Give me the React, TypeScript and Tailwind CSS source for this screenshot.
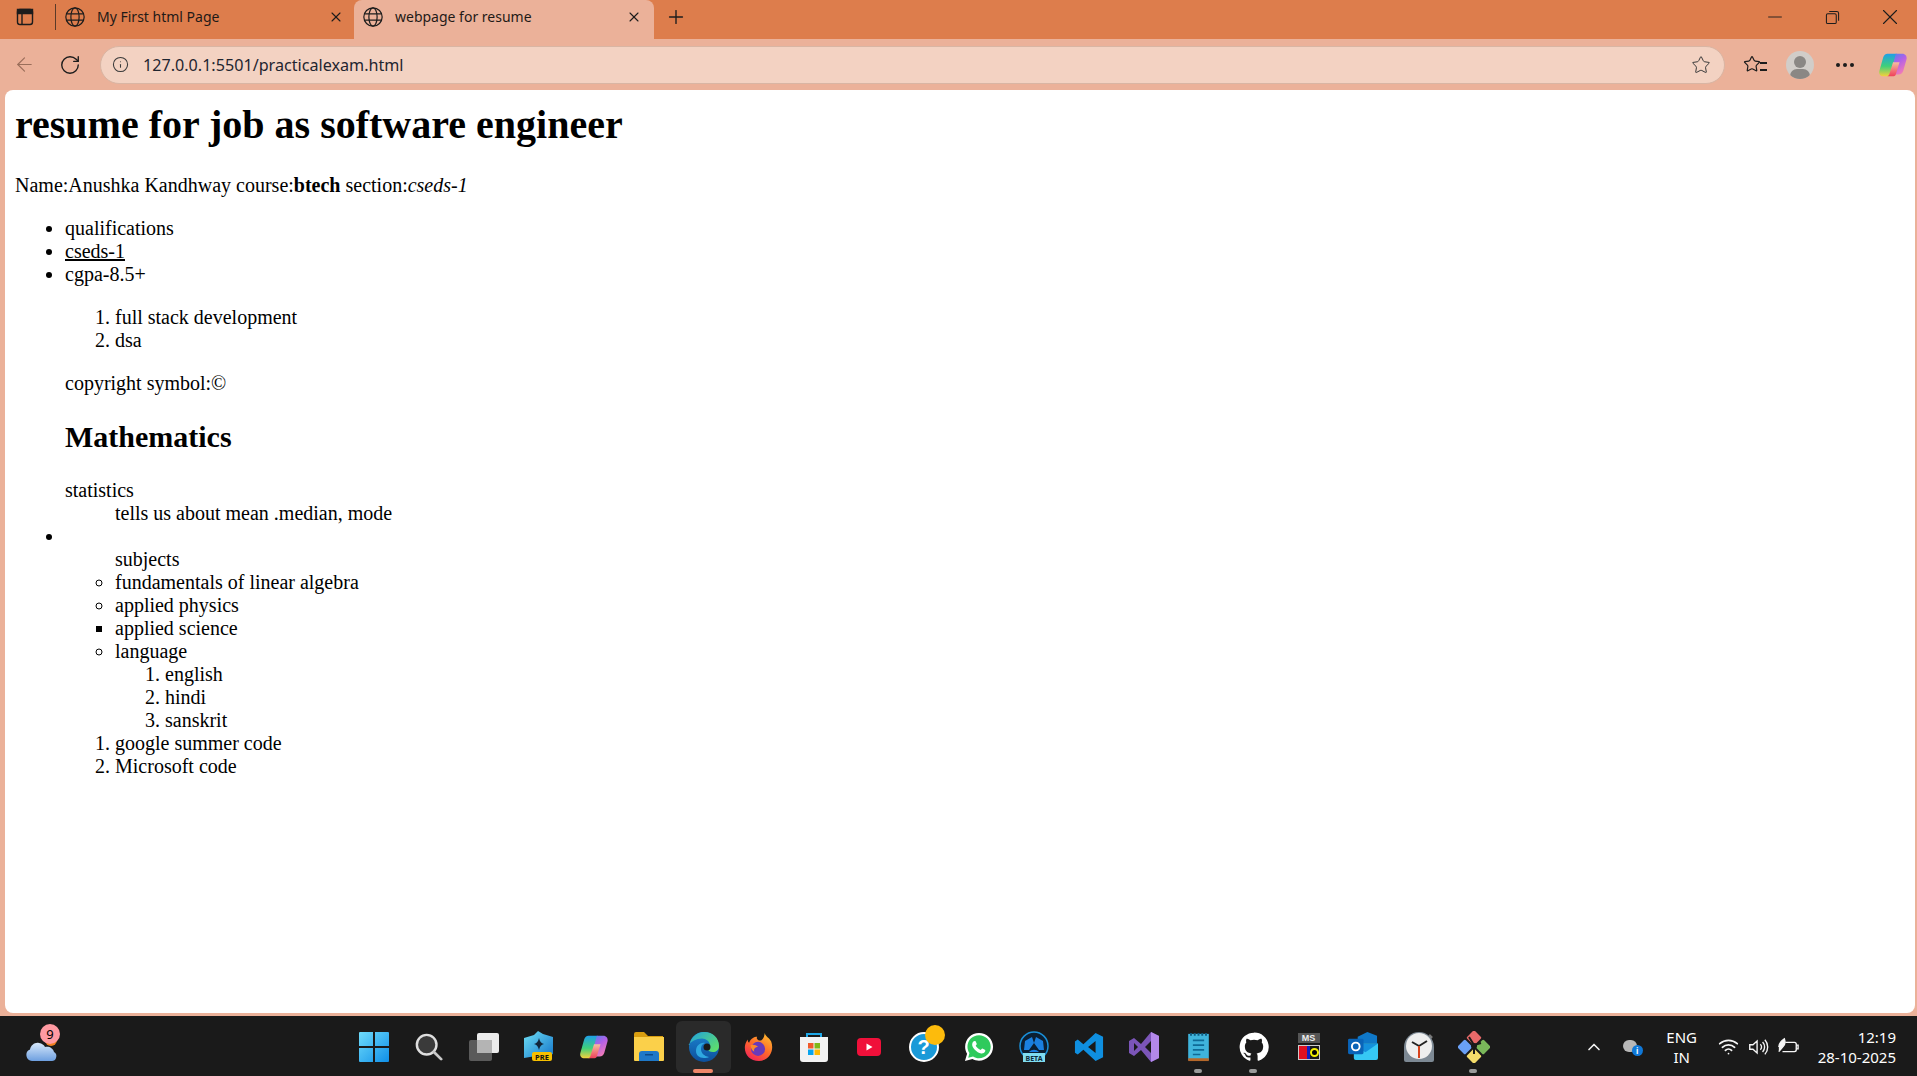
import { ReactNode } from "react";
import { ArrowLeft, RotateCw, Info, Star, Plus, X, Minus, ChevronUp, Wifi } from "lucide-react";

function Globe() {
  return (
    <svg viewBox="0 0 24 24" className="w-[22px] h-[22px] shrink-0" fill="none" stroke="#1c1c1c" strokeWidth="1.3">
      <circle cx="12" cy="12" r="10" />
      <ellipse cx="12" cy="12" rx="4.5" ry="10" />
      <path d="M2.6 8.5h18.8M2.6 15.5h18.8" />
    </svg>
  );
}

function Tab({ title, active }: { title: string; active?: boolean }) {
  return (
    <div className={`flex items-center h-[39px] w-full pl-2 pb-[5px] ${active ? "bg-[#ebb199] rounded-t-lg pr-[12px]" : "pr-[10px]"}`}>
      <Globe />
      <span className="ml-[11px] -mt-px text-[14px] text-[#1f1a17] flex-1">{title}</span>
      <X size={16} strokeWidth={1.6} color="#1c1c1c" />
    </div>
  );
}

function TaskIcon({ children, running, active }: { children: ReactNode; running?: boolean; active?: boolean }) {
  return (
    <div className={`relative w-[55px] h-[52px] flex items-center justify-center rounded-md ${active ? "bg-[#2a2a2a]" : ""}`}>
      {children}
      {running && <div className="absolute bottom-0 left-[23px] w-[8px] h-[4px] rounded-full bg-[#9a9a9a]" />}
      {active && <div className="absolute bottom-0 left-[17px] w-[20px] h-[4px] rounded-full bg-[#f0876a]" />}
    </div>
  );
}

function WindowsLogo() {
  return (
    <svg viewBox="0 0 30 30" className="w-[30px] h-[30px]">
      <defs>
        <linearGradient id="winG" x1="0" y1="0" x2="1" y2="1">
          <stop offset="0" stopColor="#6fdcfb" />
          <stop offset="1" stopColor="#0f8fe8" />
        </linearGradient>
      </defs>
      <path fill="url(#winG)" d="M0 1a1 1 0 0 1 1-1h13v14H0zM16 0h13a1 1 0 0 1 1 1v13H16zM0 16h14v14H1a1 1 0 0 1-1-1zM16 16h14v13a1 1 0 0 1-1 1H16z" />
    </svg>
  );
}

function SearchIcon() {
  return (
    <svg viewBox="0 0 30 30" className="w-[28px] h-[28px]">
      <circle cx="12.500" cy="12.500" r="10.500" fill="#3a3a3a" stroke="#dedede" strokeWidth="2.600" />
      <path d="M20 20l8 8" stroke="#c8c8c8" strokeWidth="3" strokeLinecap="round" />
    </svg>
  );
}

function TaskViewIcon() {
  return (
    <svg viewBox="0 0 32 32" className="w-[32px] h-[32px]">
      <rect x="1" y="9" width="23" height="21" rx="2" fill="#5a5a5a" />
      <rect x="9" y="2" width="22" height="20" rx="2" fill="#ececec" />
      <rect x="9" y="9" width="15" height="13" fill="#b4b4b4" />
    </svg>
  );
}

function CopilotPreIcon() {
  return (
    <svg viewBox="0 0 32 32" className="w-[32px] h-[32px]">
      <defs>
        <linearGradient id="preG" x1="0" y1="0" x2="1" y2="1">
          <stop offset="0" stopColor="#6fe0f5" />
          <stop offset="1" stopColor="#1273c9" />
        </linearGradient>
      </defs>
      <path fill="url(#preG)" d="M15 0l5 3 10 3v17l-12 5-5-3-12 2V7l10-3z" />
      <path fill="#12263a" d="M16 7c.8 3.500 2 5 5 6-3 1-4.200 2.500-5 6-.8-3.500-2-5-5-6 3-1 4.200-2.500 5-6z" />
      <rect x="9" y="21" width="20" height="9" rx="2" fill="#f7c000" />
      <text x="19" y="28.500" textAnchor="middle" fontSize="7.500" fontWeight="700" fill="#111" fontFamily="'Noto Sans', sans-serif">PRE</text>
    </svg>
  );
}

function CopilotIcon({ id, size }: { id: string; size: number }) {
  return (
    <svg viewBox="0 0 32 32" width={size} height={size}>
      <defs>
        <linearGradient id={id + "a"} x1="0" y1="0" x2="0" y2="1">
          <stop offset="0" stopColor="#1f9fe8" />
          <stop offset="0.55" stopColor="#3fd07a" />
          <stop offset="1" stopColor="#f5d13c" />
        </linearGradient>
        <linearGradient id={id + "b"} x1="0" y1="0" x2="0.600" y2="1">
          <stop offset="0" stopColor="#3f8af0" />
          <stop offset="0.5" stopColor="#b060e8" />
          <stop offset="1" stopColor="#f07ab8" />
        </linearGradient>
        <linearGradient id={id + "c"} x1="0" y1="0" x2="0" y2="1">
          <stop offset="0" stopColor="#f5c0a0" />
          <stop offset="1" stopColor="#f0405a" />
        </linearGradient>
      </defs>
      <path fill={`url(#${id}a)`} d="M10 4h10l-7 22c-.6 1.500-2 2-3 2H6c-3.500 0-5.500-2.500-4.500-6l4-14C6.200 5.500 8 4 10 4z" />
      <path fill={`url(#${id}b)`} d="M19 4h7c3 0 5 2.500 4.500 5.500L27 22c-.7 2.500-2.500 4-5 4h-9z" />
      <path fill={`url(#${id}c)`} d="M16 13h7l-4 13c-.6 1.500-2 2-3 2h-7c1.500 0 2.500-.8 3-2z" />
    </svg>
  );
}

function FolderIcon() {
  return (
    <svg viewBox="0 0 32 30" className="w-[32px] h-[30px]">
      <path fill="#d99e10" d="M1 2a2 2 0 0 1 2-2h8l4 4h15v6H1z" />
      <path fill="#fbd04a" d="M1 5h30v23a1 1 0 0 1-1 1H2a1 1 0 0 1-1-1z" />
      <path fill="#1e78c8" d="M6 22a3 3 0 0 1 3-3h14a3 3 0 0 1 3 3v7H6z" />
      <rect x="12" y="22" width="8" height="1.500" fill="#0c4a88" />
    </svg>
  );
}

function EdgeIcon() {
  return (
    <svg viewBox="0 0 32 32" className="w-[32px] h-[32px]">
      <defs>
        <linearGradient id="edgeA" x1="0" y1="0" x2="1" y2="0.800">
          <stop offset="0" stopColor="#1f9fe0" />
          <stop offset="1" stopColor="#5fe06a" />
        </linearGradient>
        <linearGradient id="edgeB" x1="0" y1="0" x2="0" y2="1">
          <stop offset="0" stopColor="#1c84d0" />
          <stop offset="1" stopColor="#0d4f9c" />
        </linearGradient>
      </defs>
      <circle cx="16" cy="16" r="15" fill="url(#edgeB)" />
      <path fill="url(#edgeA)" d="M1.500 14C3 6 9 1 16 1c9 0 15 6 15 14 0 4-3 6-6 6-3 0-5-1-4.500-2.500 1-1.500 1.500-2.500 1.500-4 0-4-4-7-8-7-6 0-11 3-13.500 6.500z" />
      <path fill="#2fa8e0" d="M8 20c0-5 4-9 9-8-3 1-4 3-4 6 0 4 3 7 8 8-1 .6-3 1-5 1-5 0-8-3-8-7z" />
      <circle cx="19" cy="16" r="3.500" fill="#1a1a1a" />
    </svg>
  );
}

function FirefoxIcon() {
  return (
    <svg viewBox="0 0 32 32" className="w-[30px] h-[30px]">
      <defs>
        <linearGradient id="foxG" x1="0.800" y1="0" x2="0.200" y2="1">
          <stop offset="0" stopColor="#ffbd2e" />
          <stop offset="0.5" stopColor="#ff6a2a" />
          <stop offset="1" stopColor="#f0205a" />
        </linearGradient>
      </defs>
      <path fill="url(#foxG)" d="M22 1c1 4 5 5 7 9 3 8 0 20-13 21C6 31 0 24 1 15c.5-3 1.500-5 3-7 0 2 .5 3 1.500 3.500C7 7 11 5 14 5c-1 2 0 3 2 4 3 1 6-3 6-8z" />
      <circle cx="15" cy="18" r="7.500" fill="#6a3ab8" />
      <path fill="#ff8a2a" d="M7 14c3-1 6 0 8 2-3 0-5 2-4 5-2-1-4-4-4-7z" />
    </svg>
  );
}

function StoreIcon() {
  return (
    <svg viewBox="0 0 30 32" className="w-[30px] h-[32px]">
      <path d="M8 7V3h14v4" fill="none" stroke="#1ea8e8" strokeWidth="2" />
      <path fill="#f2f2f2" d="M1 6h28v22a3 3 0 0 1-3 3H4a3 3 0 0 1-3-3z" />
      <rect x="9" y="12" width="5.500" height="5.500" fill="#f05a2a" />
      <rect x="15.500" y="12" width="5.500" height="5.500" fill="#80b818" />
      <rect x="9" y="18.500" width="5.500" height="5.500" fill="#08a4ee" />
      <rect x="15.500" y="18.500" width="5.500" height="5.500" fill="#ffb900" />
    </svg>
  );
}

function YoutubeIcon() {
  return (
    <svg viewBox="0 0 26 20" className="w-[26px] h-[20px]">
      <rect width="24" height="18" x="1" y="1" rx="4" fill="#f0103a" />
      <path d="M10.500 6.500l6 3.500-6 3.500z" fill="#fff" />
    </svg>
  );
}

function HelpIcon() {
  return (
    <div className="relative">
      <div className="w-[30px] h-[30px] rounded-full bg-[#1a9ad8] border-2 border-white flex items-center justify-center text-white text-[20px] font-bold font-['Liberation_Sans',sans-serif]">?</div>
      <div className="absolute -top-[7px] left-[16px] w-[20px] h-[20px] rounded-full bg-[#fdbb0c]" />
    </div>
  );
}

function WhatsappIcon() {
  return (
    <svg viewBox="0 0 32 32" className="w-[30px] h-[30px]">
      <path fill="#fff" d="M16 1C7.700 1 1.200 7.500 1.200 15.700c0 2.800.8 5.400 2.100 7.600L1 31l8-2.200c2.100 1.200 4.500 1.800 7 1.800 8.200 0 15-6.700 15-14.900S24.200 1 16 1z" />
      <path fill="#2fca5c" d="M16 3.500C9 3.500 3.700 9 3.700 15.700c0 2.500.8 4.800 2.100 6.700l-1.300 5 5.200-1.400c1.900 1.200 4 1.900 6.300 1.900 6.900 0 12.500-5.500 12.500-12.200S22.900 3.500 16 3.500z" />
      <path fill="#fff" d="M11.500 9.500c-.5 0-1.300.3-1.800 1-.6.8-1 1.800-1 3 0 1.800 1.300 3.700 2.800 5.400 2 2.100 4.300 3.500 6.800 3.900 1.800.3 3.600-.6 4.200-2 .2-.6.3-1.200.2-1.500-.2-.3-2.700-1.600-3.200-1.700-.5-.1-1.200 1.300-1.700 1.500-2-.6-4.300-2.600-5.300-4.500.3-.6 1.200-1.200 1.100-1.800-.1-.5-1.100-2.900-1.500-3.200-.2-.1-.4-.1-.6-.1z" />
    </svg>
  );
}

function BetaIcon() {
  return (
    <svg viewBox="0 0 32 32" className="w-[32px] h-[32px]">
      <circle cx="16" cy="15" r="14" fill="#0b1f33" stroke="#1a8fd8" strokeWidth="1.500" />
      <path fill="#1a7fe0" d="M7 10l7-4 2 6-5 7H6zM25 10l-7-4-2 6 5 7h5z" />
      <path fill="#1a7fe0" d="M11 21c3-3 7-3 10 0z" />
      <rect x="5" y="22" width="22" height="9" fill="#7fdcf0" />
      <text x="16" y="29.500" textAnchor="middle" fontSize="7" fontWeight="700" fill="#0b2a3a" fontFamily="'Noto Sans', sans-serif">BETA</text>
    </svg>
  );
}

function VsCodeIcon() {
  return (
    <svg viewBox="0 0 32 32" className="w-[30px] h-[30px]">
      <path fill="#0f8fe0" d="M23 1l8 4v22l-8 4-13-12-6 5-3-2V10l3-2 6 5zM23 9.500L15 16l8 6.500z" />
    </svg>
  );
}

function VisualStudioIcon() {
  return (
    <svg viewBox="0 0 32 32" className="w-[32px] h-[32px]">
      <path fill="#7b55b8" d="M1 10l5-3 7 6L23 1l8 4v22l-8 4-10-12-7 6-5-3zM6 12v8l4-4zM23 10l-6 6 6 6z" />
      <path fill="#b388ea" d="M23 1l8 4v22l-8 4z" />
    </svg>
  );
}

function NotepadIcon() {
  return (
    <svg viewBox="0 0 24 32" className="w-[23px] h-[30px]">
      <rect x="1" y="2" width="22" height="28" fill="#3fb4dc" />
      <rect x="1" y="28" width="22" height="3" fill="#b5682a" />
      <path d="M6 9h12M6 14h12M6 19h12M6 24h8" stroke="#0f6a96" strokeWidth="1.800" />
      <path d="M4 1v3M8 1v3M12 1v3M16 1v3M20 1v3" stroke="#0f5a80" strokeWidth="2" />
    </svg>
  );
}

function GithubIcon() {
  return (
    <svg viewBox="0 0 24 24" className="w-[30px] h-[30px]" fill="#fff">
      <path d="M12 .5a11.500 11.500 0 0 0-3.640 22.410c.58.110.790-.250.790-.550v-2.030c-3.200.700-3.870-1.370-3.870-1.370-.520-1.330-1.280-1.680-1.280-1.680-1.050-.720.080-.700.080-.700 1.150.080 1.760 1.180 1.760 1.180 1.030 1.760 2.700 1.250 3.360.960.100-.750.400-1.250.730-1.540-2.550-.290-5.240-1.280-5.240-5.680 0-1.260.450-2.280 1.180-3.090-.120-.290-.510-1.460.110-3.050 0 0 .960-.310 3.160 1.180a11 11 0 0 1 5.760 0c2.200-1.490 3.160-1.180 3.160-1.180.620 1.590.230 2.760.110 3.050.740.810 1.180 1.830 1.180 3.090 0 4.410-2.690 5.380-5.250 5.670.410.360.780 1.050.780 2.120v3.140c0 .310.210.670.800.550A11.500 11.500 0 0 0 12 .5z" />
    </svg>
  );
}

function MsIcon() {
  return (
    <div className="w-[22px] flex flex-col gap-[2px]">
      <div className="h-[10px] bg-[#555] text-[#eee] text-[9px] leading-[10px] text-center font-bold font-['Liberation_Sans',sans-serif]">MS</div>
      <div className="h-[15px] border border-[#ccc] flex items-center">
        <div className="flex-1 h-full bg-[#e01020]" />
        <div className="w-[3px] h-full bg-[#1020c0]" />
        <div className="w-[9px] h-[9px] rounded-full border-2 border-[#f5f000] bg-black" />
      </div>
    </div>
  );
}

function OutlookIcon() {
  return (
    <svg viewBox="0 0 32 30" className="w-[31px] h-[29px]">
      <path fill="#0f78c8" d="M10 5l10-5 10 4v8H10z" />
      <path fill="#36c8f5" d="M6 12h25v15a2 2 0 0 1-2 2H8a2 2 0 0 1-2-2z" />
      <path fill="#1490dc" d="M31 12L18 21 6 14v-2z" />
      <rect x="0" y="7" width="16" height="16" rx="1.500" fill="#0a64b8" />
      <circle cx="8" cy="15" r="4" fill="none" stroke="#fff" strokeWidth="2" />
    </svg>
  );
}

function ClockIcon() {
  return (
    <svg viewBox="0 0 32 32" className="w-[32px] h-[32px]">
      <path d="M26 4l3 3" stroke="#777" strokeWidth="2.500" />
      <path fill="#7d8994" d="M1 16a15 15 0 0 1 30 0v13a2 2 0 0 1-2 2H3a2 2 0 0 1-2-2z" />
      <circle cx="16" cy="15" r="13" fill="#eeeeee" />
      <path d="M16 15L9 11M16 15l8-5" stroke="#222" strokeWidth="2" />
      <path d="M16 15v12" stroke="#d8431c" strokeWidth="2" />
    </svg>
  );
}

function GitKrakenIcon() {
  return (
    <svg viewBox="0 0 32 32" className="w-[32px] h-[32px]">
      <g transform="rotate(45 16 16)">
        <rect x="4" y="4" width="11" height="11" rx="1.500" fill="#e86a6a" />
        <rect x="17" y="4" width="11" height="11" rx="1.500" fill="#7ab85a" />
        <rect x="17" y="17" width="11" height="11" rx="1.500" fill="#f5dc6a" />
        <rect x="4" y="17" width="11" height="11" rx="1.500" fill="#6aa0f5" />
      </g>
      <path d="M11 6l5 8M16 14l7-2M16 14v9" stroke="#1a1a1a" strokeWidth="2" fill="none" />
      <circle cx="16" cy="15" r="3" fill="#1a1a1a" />
    </svg>
  );
}

function Weather() {
  return (
    <div className="relative w-[32px] h-[26px] ml-[25px] mt-[8px]">
      <div className="absolute -top-[4px] left-[20px] w-[12px] h-[12px] rounded-full bg-[#f08020]" />
      <svg viewBox="0 0 32 22" className="absolute inset-0 w-[32px] h-[26px]">
        <defs>
          <linearGradient id="cloudG" x1="0" y1="0" x2="0" y2="1">
            <stop offset="0" stopColor="#d7e8fb" />
            <stop offset="1" stopColor="#6d9fe0" />
          </linearGradient>
        </defs>
        <path fill="url(#cloudG)" d="M7 21a6 6 0 0 1-2-11.500C6 5 10 2 14 3c3 .5 5 2 6 4 4-1 8 1 9 5 2 1 3 3 2 6-.5 2-2 3-4 3z" />
      </svg>
      <div className="absolute -top-[14px] left-[15px] w-[20px] h-[20px] rounded-full bg-[#ff9aa2] text-black text-[13px] leading-[20px] text-center font-['Noto_Sans',sans-serif]">9</div>
    </div>
  );
}

function Tray() {
  return (
    <div className="ml-auto flex items-center text-white font-['Noto_Sans',sans-serif] text-[15px] leading-[20px]">
      <ChevronUp size={20} strokeWidth={2} color="#f0f0f0" />
      <div className="relative w-[20px] h-[18px] ml-[19px] mt-[1px]">
        <div className="absolute left-0 top-[2px] w-[14px] h-[12px] rounded-full bg-[#b8b8b8]" />
        <div className="absolute right-0 bottom-0 w-[11px] h-[11px] rounded-full bg-[#0f78d8] text-white text-[8px] leading-[11px] text-center font-bold">i</div>
      </div>
      <div className="ml-[19px] text-center w-[40px]">
        <div>ENG</div>
        <div>IN</div>
      </div>
      <Wifi size={21} strokeWidth={2} color="#f5f5f5" className="ml-[16px]" />
      <svg viewBox="0 0 24 24" className="w-[22px] h-[22px] ml-[8px]" fill="none" stroke="#f5f5f5" strokeWidth="1.500">
        <path d="M3 9.500v5h3.500L11 18.500v-13L6.500 9.500zM14.500 9a4 4 0 0 1 0 6M17 6.500a8 8 0 0 1 0 11M19.500 4a12 12 0 0 1 0 16" />
      </svg>
      <svg viewBox="0 0 24 24" className="w-[22px] h-[22px] ml-[8px]" fill="none" stroke="#f5f5f5" strokeWidth="1.500">
        <path d="M9 7h10a2 2 0 0 1 2 2v6a2 2 0 0 1-2 2H6M21 10h2v4h-2" />
        <path d="M2 12c0-4 3-7 6-9 1 3 1 6-1 8l-5 6" fill="#f5f5f5" />
      </svg>
      <div className="ml-[19px] mr-[21px] text-right">
        <div>12:19</div>
        <div>28-10-2025</div>
      </div>
    </div>
  );
}

export default function App() {
  return (
    <div className="w-[1917px] h-[1076px] overflow-hidden flex flex-col bg-[#ebb199] font-['Noto_Sans',sans-serif]">
      {/* Tab strip */}
      <div className="flex items-center h-[39px] bg-[#dd7d4c] shrink-0">
        <div className="w-[49px] flex justify-center pb-[5px]">
          <svg viewBox="0 0 20 20" className="w-[20px] h-[20px]" fill="none" stroke="#1c1c1c" strokeWidth="1.400">
            <rect x="2.500" y="2.500" width="15" height="15" rx="2.500" />
            <path d="M7 6.500v11" />
            <path d="M2.500 2.500h15v4h-15z" fill="#1c1c1c" />
          </svg>
        </div>
        <div className="w-px h-[26px] bg-[#5a3a28] ml-[6px] mb-[5px]" />
        <div className="w-[298px]"><Tab title="My First html Page" /></div>
        <div className="w-[300px]"><Tab title="webpage for resume" active /></div>
        <Plus size={22} strokeWidth={1.5} color="#1c1c1c" className="ml-[11px] mb-[5px]" />
        <div className="ml-auto flex items-center mb-[5px]">
          <Minus size={22} strokeWidth={1} color="#1c1c1c" className="mr-[39px]" />
          <svg viewBox="0 0 16 16" className="w-[15px] h-[15px] mr-[37px]" fill="none" stroke="#1c1c1c" strokeWidth="1.100">
            <rect x="1.500" y="4" width="10.500" height="10.500" rx="1.500" />
            <path d="M4.500 1.500h8a2 2 0 0 1 2 2v8" />
          </svg>
          <X size={26} strokeWidth={1} color="#1c1c1c" className="mr-[14px]" />
        </div>
      </div>

      {/* Toolbar */}
      <div className="flex items-center h-[51px] shrink-0 bg-[#ebb199]">
        <ArrowLeft size={23} strokeWidth={1.2} color="#9a6e5a" className="ml-[13px]" />
        <RotateCw size={22} strokeWidth={1.5} color="#1c1c1c" className="ml-[23px]" />
        <div className="ml-[19px] w-[1625px] h-[38px] rounded-full bg-[#f3d2c2] border border-[#d9b5a3] flex items-center pl-[11px] pr-[13px]">
          <Info size={17} strokeWidth={1.5} color="#3a3a3a" />
          <span className="ml-[14px] mt-px text-[16.15px] text-[#1f2530] flex-1">127.0.0.1:5501/practicalexam.html</span>
          <Star size={20} strokeWidth={1.2} color="#3a3a3a" />
        </div>
        <div className="ml-[18px] relative w-[24px] h-[24px]">
          <Star size={18} strokeWidth={1.6} color="#1c1c1c" className="absolute left-0 top-[2px]" />
          <div className="absolute right-0 top-[9px] w-[7px] h-[9px] border-y-2 border-[#1c1c1c]" />
        </div>
        <div className="ml-[19px] relative w-[28px] h-[28px] rounded-full bg-[#d1cdc9] overflow-hidden">
          <div className="absolute left-[8px] top-[5px] w-[12px] h-[12px] rounded-full bg-[#8a8784]" />
          <div className="absolute left-[4px] top-[18px] w-[20px] h-[14px] rounded-full bg-[#8a8784]" />
        </div>
        <div className="ml-[22px] flex gap-[3px]">
          <div className="w-[4px] h-[4px] rounded-full bg-[#1c1c1c]" />
          <div className="w-[4px] h-[4px] rounded-full bg-[#1c1c1c]" />
          <div className="w-[4px] h-[4px] rounded-full bg-[#1c1c1c]" />
        </div>
        <div className="ml-[24px]"><CopilotIcon id="cpTop" size={30} /></div>
      </div>

      {/* Page */}
      <div className="h-[923px] ml-[5px] mr-[2px] shrink-0 bg-white rounded-lg overflow-hidden pt-px px-[10px] font-['Liberation_Serif',serif] text-[20px] leading-[23px] text-black">
        <h1 className="text-[40px] leading-[46px] font-bold mt-[11px] mb-[26px]">resume for job as software engineer</h1>
        <p className="my-5">
          Name:Anushka Kandhway course:<b>btech</b> section:<i>cseds-1</i>
        </p>
        <ul className="list-disc pl-[50px] my-5">
          <li>qualifications</li>
          <li><a className="underline">cseds-1</a></li>
          <li>
            cgpa-8.5+
            <ol className="list-decimal pl-[50px] my-5">
              <li>full stack development</li>
              <li>dsa</li>
            </ol>
            <p className="my-5">copyright symbol:©</p>
            <h2 className="text-[30px] leading-[34px] font-bold mt-[25px] mb-[25px]">Mathematics</h2>
            <dl>
              <dt>statistics</dt>
              <dd className="ml-[50px]">tells us about mean .median, mode</dd>
            </dl>
          </li>
          <li>
            <br />
            <div className="pl-[50px]">subjects</div>
            <ul className="list-[circle] pl-[50px]">
              <li>fundamentals of linear algebra</li>
              <li>applied physics</li>
              <li className="list-[square]">applied science</li>
              <li>
                language
                <ol className="list-decimal pl-[50px]">
                  <li>english</li>
                  <li>hindi</li>
                  <li>sanskrit</li>
                </ol>
              </li>
            </ul>
            <ol className="list-decimal pl-[50px]">
              <li>google summer code</li>
              <li>Microsoft code</li>
            </ol>
          </li>
        </ul>
      </div>

      {/* Taskbar */}
      <div className="mt-[3px] h-[60px] shrink-0 bg-[#1a1a1a] flex items-center pt-px">
        <div className="w-[346px] shrink-0"><Weather /></div>
        <div className="flex items-center">
          <TaskIcon><WindowsLogo /></TaskIcon>
          <TaskIcon><SearchIcon /></TaskIcon>
          <TaskIcon><TaskViewIcon /></TaskIcon>
          <TaskIcon><CopilotPreIcon /></TaskIcon>
          <TaskIcon><CopilotIcon id="cpBar" size={30} /></TaskIcon>
          <TaskIcon><FolderIcon /></TaskIcon>
          <TaskIcon active><EdgeIcon /></TaskIcon>
          <TaskIcon><FirefoxIcon /></TaskIcon>
          <TaskIcon><StoreIcon /></TaskIcon>
          <TaskIcon><YoutubeIcon /></TaskIcon>
          <TaskIcon><HelpIcon /></TaskIcon>
          <TaskIcon><WhatsappIcon /></TaskIcon>
          <TaskIcon><BetaIcon /></TaskIcon>
          <TaskIcon><VsCodeIcon /></TaskIcon>
          <TaskIcon><VisualStudioIcon /></TaskIcon>
          <TaskIcon running><NotepadIcon /></TaskIcon>
          <TaskIcon running><GithubIcon /></TaskIcon>
          <TaskIcon><MsIcon /></TaskIcon>
          <TaskIcon><OutlookIcon /></TaskIcon>
          <TaskIcon><ClockIcon /></TaskIcon>
          <TaskIcon running><GitKrakenIcon /></TaskIcon>
        </div>
        <Tray />
      </div>
    </div>
  );
}
